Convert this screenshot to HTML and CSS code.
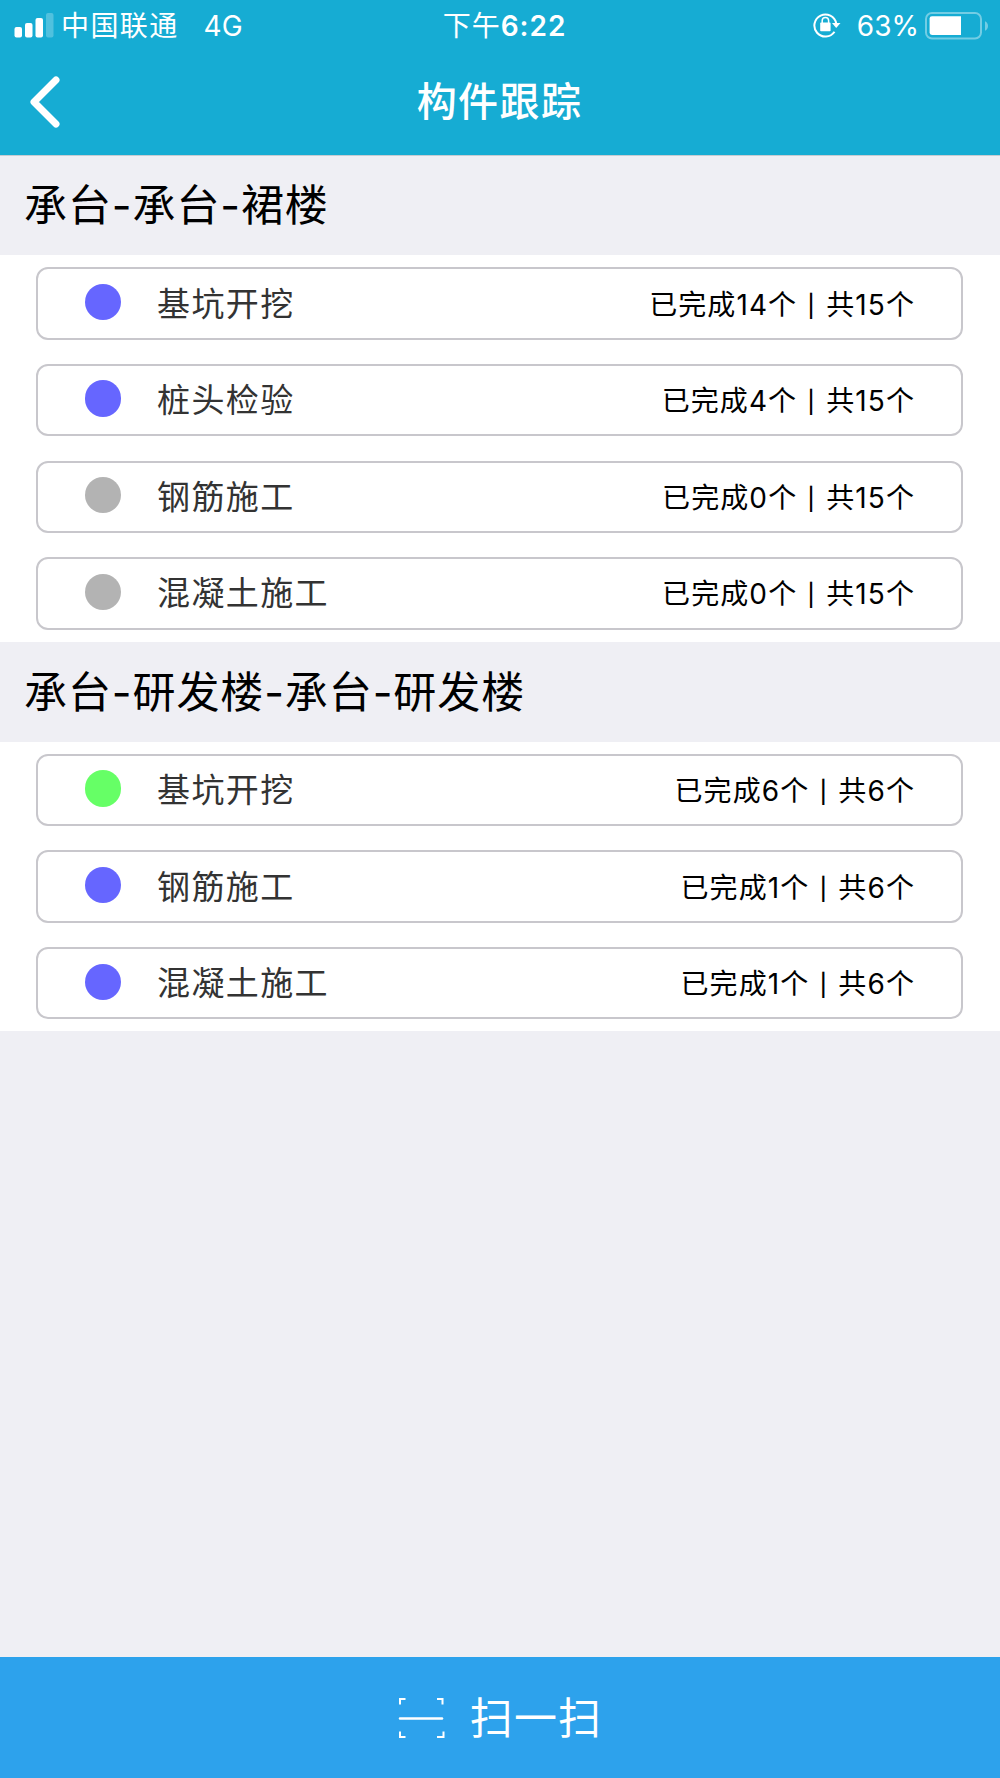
FILE: index.html
```
<!DOCTYPE html>
<html lang="zh-CN">
<head>
  <meta charset="UTF-8" />
  <meta name="viewport" content="width=device-width, initial-scale=1.0"/>
  <title>构件跟踪</title>
  <link rel="stylesheet" href="styles.css">
</head>

<body>
  <header>
    <div class="status-bar">
      <div class="status-left">
        <svg class="signal" width="40" height="26" viewBox="0 0 40 26" fill="#fff">
          <rect x="0.5" y="14" width="7.5" height="10.5" rx="2"/>
          <rect x="11" y="10" width="7.5" height="14.5" rx="2"/>
          <rect x="21.5" y="5" width="7.5" height="19.5" rx="2"/>
          <rect x="32" y="0" width="7.5" height="24.5" rx="2" opacity="0.25"/>
        </svg>
        <span class="carrier">中国联通</span>
        <span class="network">4G</span>
      </div>
      <div class="status-time">下午<b>6:22</b></div>
      <div class="status-right">
        <svg class="lock" width="28" height="26" viewBox="0 0 28 26">
          <path d="M21.5 19.7A11 11 0 1 1 23.2 11.5" fill="none" stroke="#fff" stroke-width="2"/>
          <path d="M19 11h8.5l-4.3 5z" fill="#fff"/>
          <rect x="7.2" y="10.6" width="10.4" height="8.6" rx="0.8" fill="#fff"/>
          <path d="M9.2 11V8.6a3.2 3.2 0 0 1 6.4 0V11" fill="none" stroke="#fff" stroke-width="1.5"/>
        </svg>
        <span class="percent">63%</span>
        <svg class="battery" width="64" height="28" viewBox="0 0 64 28">
          <rect x="1" y="1" width="55" height="25.5" rx="6" fill="none" stroke="#fff" stroke-width="2" opacity="0.4"/>
          <path d="M60 9.3c4 1.5 4 8 0 9.5z" fill="#fff" opacity="0.4"/>
          <path d="M36 4.2H7a2.4 2.4 0 0 0-2.4 2.4v14a2.4 2.4 0 0 0 2.4 2.4H36z" fill="#fff"/>
        </svg>
      </div>
    </div>
    <div class="nav-bar">
      <svg class="back" width="32" height="54" viewBox="0 0 32 54">
        <path d="M27 5L5 27l22 22" fill="none" stroke="#fff" stroke-width="7" stroke-linecap="round" stroke-linejoin="round"/>
      </svg>
      <h1>构件跟踪</h1>
    </div>
  </header>

  <main>
    <section>
      <h2>承台-承台-裙楼</h2>
      <ul>
        <li><i class="dot doing"></i><span class="name">基坑开挖</span><span class="count">已完成14个 <s>|</s> 共15个</span></li>
        <li><i class="dot doing"></i><span class="name">桩头检验</span><span class="count">已完成4个 <s>|</s> 共15个</span></li>
        <li><i class="dot"></i><span class="name">钢筋施工</span><span class="count">已完成0个 <s>|</s> 共15个</span></li>
        <li><i class="dot"></i><span class="name">混凝土施工</span><span class="count">已完成0个 <s>|</s> 共15个</span></li>
      </ul>
    </section>
    <section>
      <h2>承台-研发楼-承台-研发楼</h2>
      <ul>
        <li><i class="dot done"></i><span class="name">基坑开挖</span><span class="count">已完成6个 <s>|</s> 共6个</span></li>
        <li><i class="dot doing"></i><span class="name">钢筋施工</span><span class="count">已完成1个 <s>|</s> 共6个</span></li>
        <li><i class="dot doing"></i><span class="name">混凝土施工</span><span class="count">已完成1个 <s>|</s> 共6个</span></li>
      </ul>
    </section>
  </main>

  <footer>
    <svg class="scan" width="48" height="42" viewBox="0 0 48 42" fill="none" stroke="#fff" stroke-width="2">
      <path d="M2 7.5V2h5.5M39 2h5.5v5.5M2 34.5V40h5.5M39 40h6.5v-5.5"/>
      <path d="M2 21.5h42" stroke-linecap="round" stroke-width="2.5"/>
    </svg>
    <span>扫一扫</span>
  </footer>
</body>
</html>
```
FILE: styles.css
```
* { box-sizing: border-box; margin: 0; padding: 0; }
body {
  background: #efeff4; color: #000;
  font-family: Inter, "Noto Sans CJK SC", sans-serif;
  display: flex; flex-direction: column;
  height: 1778px;
  white-space: nowrap;
}
header {
  height: 155px;
  background: #16acd3;
  box-shadow: 0 1px 0 #c5ccd2;
  color: #fff;
}
.status-bar {
  display: grid;
  grid-template-columns: 1fr auto 1fr;
  align-items: center;
  height: 50px;
  padding: 0 11px 0 14px;
  font-size: 28px;
  line-height: 50px;
}
.status-left, .status-right {
  display: flex;
  align-items: center;
}
.carrier {
  margin-left: 7px;
  letter-spacing: 1.4px;
}
.network {
  margin-left: 25px;
  padding-top: 1px;
}
.status-time {
  padding: 1px 0 0 6px;
  letter-spacing: 1px;
}
.status-time b {
  font-weight: 600;
}
.status-right {
  justify-content: flex-end;
}
.lock {
  margin-top: -2px;
}
.percent {
  margin: 0 6px 0 16px;
  padding-top: 1px;
}
.nav-bar {
  display: grid;
  grid-template-columns: 1fr auto 1fr;
  align-items: center;
  height: 104px;
  padding: 0 30px 0 29px;
}
.nav-bar h1 {
  padding-bottom: 6px;
  font-size: 40px;
  font-weight: 500;
  letter-spacing: 1.4px;
}
main {
  flex: 1;
}
h2 {
  height: 100.4px;
  padding-left: 24px;
  font-size: 43px;
  font-weight: 400;
  line-height: 101px;
  letter-spacing: 0.9px;
}
ul {
  list-style: none;
  background: #fff;
  padding: 12px 37px 12px 36px;
  display: grid;
  gap: 24.2px;
}
li {
  display: flex;
  align-items: center;
  height: 72.4px;
  padding: 0 46px 0 46.5px;
  border: 2px solid #c8c7cc;
  border-radius: 12px;
}
.dot {
  width: 36.5px;
  height: 36.5px;
  margin: -3px 36px 0 0;
  border-radius: 50%;
  background: #b3b3b3;
}
.dot.doing { background: #6666ff; }
.dot.done { background: #66ff66; }
.name {
  flex: 1;
  padding-bottom: 4px;
  color: #333;
  font-size: 33px;
  letter-spacing: 1.4px;
}
.count {
  padding-bottom: 2px;
  font-size: 28px;
  letter-spacing: 1.1px;
}
/* divider between done and total */
.count s {
  display: inline-block;
  width: 11px;
  font-size: 22px;
  font-weight: 500;
  text-align: center;
  text-decoration: none;
  vertical-align: 1px;
}
footer {
  display: flex;
  justify-content: center;
  align-items: center;
  gap: 24px;
  height: 121px;
  background: #2da2ec;
  color: #fff;
  font-size: 43px;
  letter-spacing: 1.2px;
}
footer span {
  padding-bottom: 6px;
}
```
